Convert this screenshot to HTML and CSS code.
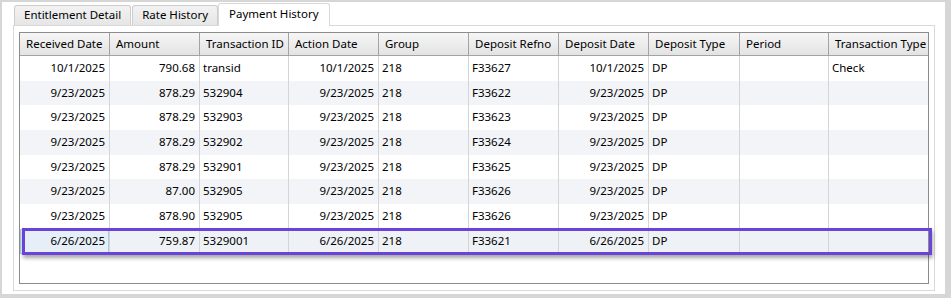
FILE: index.html
```html
<!DOCTYPE html>
<html lang="en">
<head>
  <meta charset="UTF-8" />
  <title>Payment History</title>
  <link rel="stylesheet" href="styles.css">
</head>
<body>
  <div class="window">
    <div class="tabs">
      <div class="tab">Entitlement Detail</div>
      <div class="tab">Rate History</div>
      <div class="tab active">Payment History</div>
    </div>

    <div class="panel">
      <div class="grid">
        <div class="row head">
          <div class="cell">Received Date</div>
          <div class="cell">Amount</div>
          <div class="cell">Transaction ID</div>
          <div class="cell">Action Date</div>
          <div class="cell">Group</div>
          <div class="cell">Deposit Refno</div>
          <div class="cell">Deposit Date</div>
          <div class="cell">Deposit Type</div>
          <div class="cell">Period</div>
          <div class="cell">Transaction Type</div>
        </div>

        <div class="rows">
          <div class="row">
            <div class="cell num">10/1/2025</div>
            <div class="cell num">790.68</div>
            <div class="cell">transid</div>
            <div class="cell num">10/1/2025</div>
            <div class="cell">218</div>
            <div class="cell">F33627</div>
            <div class="cell num">10/1/2025</div>
            <div class="cell">DP</div>
            <div class="cell"></div>
            <div class="cell">Check</div>
          </div>
          <div class="row">
            <div class="cell num">9/23/2025</div>
            <div class="cell num">878.29</div>
            <div class="cell">532904</div>
            <div class="cell num">9/23/2025</div>
            <div class="cell">218</div>
            <div class="cell">F33622</div>
            <div class="cell num">9/23/2025</div>
            <div class="cell">DP</div>
            <div class="cell"></div>
            <div class="cell"></div>
          </div>
          <div class="row">
            <div class="cell num">9/23/2025</div>
            <div class="cell num">878.29</div>
            <div class="cell">532903</div>
            <div class="cell num">9/23/2025</div>
            <div class="cell">218</div>
            <div class="cell">F33623</div>
            <div class="cell num">9/23/2025</div>
            <div class="cell">DP</div>
            <div class="cell"></div>
            <div class="cell"></div>
          </div>
          <div class="row">
            <div class="cell num">9/23/2025</div>
            <div class="cell num">878.29</div>
            <div class="cell">532902</div>
            <div class="cell num">9/23/2025</div>
            <div class="cell">218</div>
            <div class="cell">F33624</div>
            <div class="cell num">9/23/2025</div>
            <div class="cell">DP</div>
            <div class="cell"></div>
            <div class="cell"></div>
          </div>
          <div class="row">
            <div class="cell num">9/23/2025</div>
            <div class="cell num">878.29</div>
            <div class="cell">532901</div>
            <div class="cell num">9/23/2025</div>
            <div class="cell">218</div>
            <div class="cell">F33625</div>
            <div class="cell num">9/23/2025</div>
            <div class="cell">DP</div>
            <div class="cell"></div>
            <div class="cell"></div>
          </div>
          <div class="row">
            <div class="cell num">9/23/2025</div>
            <div class="cell num">87.00</div>
            <div class="cell">532905</div>
            <div class="cell num">9/23/2025</div>
            <div class="cell">218</div>
            <div class="cell">F33626</div>
            <div class="cell num">9/23/2025</div>
            <div class="cell">DP</div>
            <div class="cell"></div>
            <div class="cell"></div>
          </div>
          <div class="row">
            <div class="cell num">9/23/2025</div>
            <div class="cell num">878.90</div>
            <div class="cell">532905</div>
            <div class="cell num">9/23/2025</div>
            <div class="cell">218</div>
            <div class="cell">F33626</div>
            <div class="cell num">9/23/2025</div>
            <div class="cell">DP</div>
            <div class="cell"></div>
            <div class="cell"></div>
          </div>
          <div class="row selected">
            <div class="cell num focus">6/26/2025</div>
            <div class="cell num">759.87</div>
            <div class="cell">5329001</div>
            <div class="cell num">6/26/2025</div>
            <div class="cell">218</div>
            <div class="cell">F33621</div>
            <div class="cell num">6/26/2025</div>
            <div class="cell">DP</div>
            <div class="cell"></div>
            <div class="cell"></div>
          </div>
        </div>

        <!-- annotation around the selected row -->
        <div class="marker"></div>
      </div>
    </div>
  </div>
</body>
</html>
```

FILE: styles.css
```css
* {
  box-sizing: border-box;
}
body {
  margin: 0;
  font-family: 'Noto Sans', 'Open Sans', sans-serif;
  font-size: 11.5px;
  color: #000;
  background-color: #fff;
}
.window {
  width: 951px;
  height: 298px;
  border: solid #d6d6d6;
  border-width: 2px 6px 4px 2px;
  padding: 1px 10px 3px 11px;
}
.tabs {
  display: flex;
  align-items: flex-end;
  height: 22px;
  padding-left: 1px;
  position: relative;
  z-index: 1;
}
.tab {
  height: 20px;
  padding: 0 9px;
  margin-right: 1px;
  line-height: 18px;
  border: 1px solid #cdcdcd;
  border-bottom: none;
  border-radius: 3px 3px 0 0;
  background: linear-gradient(#f2f2f2, #e6e6e6);
}
.tab.active {
  height: 23px;
  margin-bottom: -1px;
  margin-left: -1px;
  padding: 0 10px;
  line-height: 20px;
  border-color: #d9d9d9;
  background: #fff;
}
.panel {
  height: 266px;
  border: 1px solid #d9d9d9;
  padding: 6px 5px;
}
.grid {
  position: relative;
  height: 252px;
  border: 1px solid #8c8c8c;
}
.row {
  display: grid;
  grid-template-columns: 90px 90px 89px 90px 90px 90px 90px 91px 89px 1fr;
  height: 24.7px;
}
.cell {
  padding: 0 3px;
  line-height: 24.7px;
  white-space: nowrap;
  overflow: hidden;
  border-right: 1px solid #d5d5d5;
}
.cell:last-child {
  border-right: none;
}
.cell.num {
  text-align: right;
  padding-right: 4px;
}
.head {
  height: 23px;
  background: linear-gradient(#f6f6f6, #e3e3e3);
  border-bottom: 1px solid #a3a3a3;
}
.head .cell {
  padding-left: 6px;
  line-height: 22px;
  border-right-color: #a3a3a3;
}
.rows .row:nth-child(even) {
  background-color: #f2f4f7;
}
.rows .row.selected {
  background-color: #eef2f6;
}
.cell.focus {
  background-color: #e6eff8;
  box-shadow: inset 0 0 0 1px #a8cbe9;
}
.marker {
  position: absolute;
  left: 2px;
  top: 195px;
  width: 910px;
  height: 27px;
  border: 3px solid #6a44d8;
  box-shadow: 1px 3px 4px rgba(0, 0, 0, 0.35);
}
```
